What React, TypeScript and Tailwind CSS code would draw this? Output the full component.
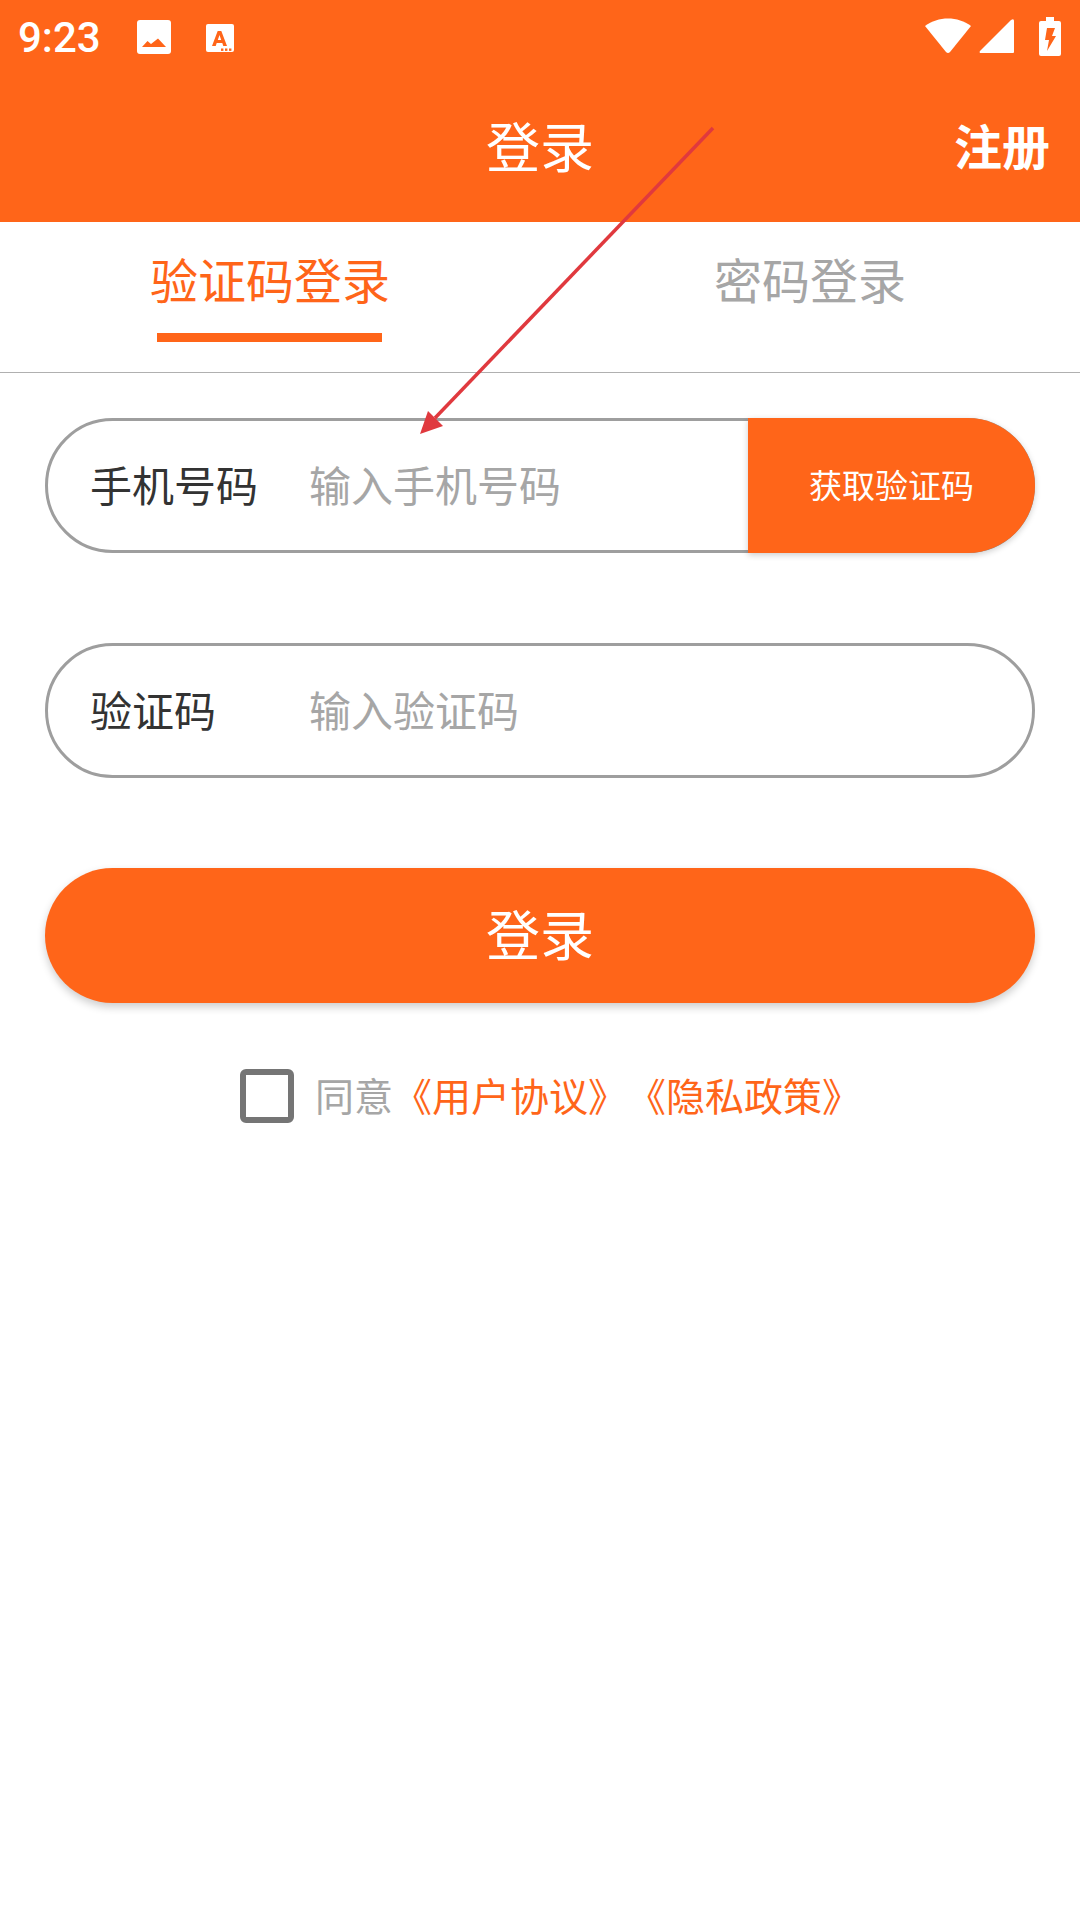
const cjk = "font-['Noto_Sans_CJK_SC','Noto_Sans',sans-serif]";

function StatusBar() {
  return (
    <div className="flex h-[72px] items-center pt-[4px] pl-[18px] pr-[19px] text-white">
      <span className="font-['Roboto',sans-serif] text-[42px] leading-none font-medium">9:23</span>
      {/* picture notification */}
      <svg className="ml-[36px]" width="36" height="36" viewBox="0 0 36 36">
        <rect x="0" y="0" width="34" height="34" rx="3" fill="#fff" />
        <path d="M5 27 L10.5 21 L14 24 L21 18.5 L29 27 Z" fill="#ff6519" />
      </svg>
      {/* app notification */}
      <svg className="ml-[32px]" width="30" height="30" viewBox="0 0 30 30">
        <rect x="1" y="1" width="28" height="28" rx="2" fill="#fff" />
        <path d="M7 23 L12.7 8 H16.3 L22 23 H18.3 L17.3 20 H11.7 L10.7 23 Z M12.8 17 H16.2 L14.5 12 Z" fill="#ff6519" />
        <rect x="16" y="25.5" width="2.4" height="2.4" fill="#ff6519" />
        <rect x="20" y="25.5" width="2.4" height="2.4" fill="#ff6519" />
        <rect x="24" y="25.5" width="2.4" height="2.4" fill="#ff6519" />
      </svg>
      <div className="-mt-[4px] ml-auto flex items-center gap-[8px]">
        {/* wifi */}
        <svg width="46" height="36" viewBox="0 0 46 36">
          <path d="M0 8 C13 -2 33 -2 46 8 L25 34 Q23 36 21 34 Z" fill="#fff" />
        </svg>
        {/* signal */}
        <svg className="mr-[16px]" width="36" height="36" viewBox="0 0 36 36">
          <path d="M1 35 Q0 34 1 33 L32 2 Q35 0 35 3 V34 Q35 35 34 35 Z" fill="#fff" />
        </svg>
        {/* battery charging */}
        <svg width="22" height="39" viewBox="0 0 22 39">
          <path d="M7 0 H15 V4 H20 Q22 4 22 6 V37 Q22 39 20 39 H2 Q0 39 0 37 V6 Q0 4 2 4 H7 Z" fill="#fff" />
          <path d="M8 11 H16 L13 19 H17 L8 34 L10 23 H6 Z" fill="#ff6519" />
        </svg>
      </div>
    </div>
  );
}

function InputRow({ label, placeholder, action }: { label: string; placeholder: string; action?: string }) {
  return (
    <div className="relative mx-[45px] flex h-[135px] items-center rounded-full border-[3px] border-[#9e9e9e] bg-white pb-[4px]">
      <span className="ml-[42px] w-[219px] text-[42px] leading-none text-[#333]">{label}</span>
      <span className="text-[42px] leading-none text-[#a6a6a6]">{placeholder}</span>
      {action && (
        <button className="absolute -top-[3px] -right-[3px] flex h-[135px] w-[287px] items-center justify-center rounded-r-full bg-[#ff6519] pb-[2px] text-[33px] leading-none text-white shadow-[0_2px_6px_rgba(0,0,0,0.2)]">
          {action}
        </button>
      )}
    </div>
  );
}

export default function App() {
  return (
    <div className={`${cjk} relative h-[1920px] w-[1080px] overflow-hidden bg-white`}>
      <header className="h-[222px] bg-[#ff6519]">
        <StatusBar />
        <div className="relative flex h-[150px] items-center justify-center pb-[4px] text-white">
          <h1 className="text-[54px] leading-none font-normal">登录</h1>
          <span className="absolute top-[48px] right-[30px] text-[48px] leading-none font-bold">注册</span>
        </div>
      </header>

      <nav className="flex h-[151px] border-b border-[#b0b0b0]">
        <div className="relative flex w-[540px] justify-center pt-[26px]">
          <span className="text-[48px] leading-[60px] text-[#ff6519]">验证码登录</span>
          <span className="absolute top-[111px] left-[157px] h-[9px] w-[225px] bg-[#ff6519]" />
        </div>
        <div className="flex w-[540px] justify-center pt-[26px]">
          <span className="text-[48px] leading-[60px] text-[#a6a6a6]">密码登录</span>
        </div>
      </nav>

      <main className="pt-[45px]">
        <InputRow label="手机号码" placeholder="输入手机号码" action="获取验证码" />
        <div className="mt-[90px]">
          <InputRow label="验证码" placeholder="输入验证码" />
        </div>
        <button className="mx-[45px] mt-[90px] flex h-[135px] w-[990px] items-center justify-center rounded-full bg-[#ff6519] pb-[5px] text-[54px] leading-none text-white shadow-[0_4px_8px_rgba(0,0,0,0.2)]">
          登录
        </button>
        <div className="mt-[66px] flex items-center pl-[240px]">
          <span className="h-[54px] w-[54px] rounded-[6px] border-[6px] border-[#757575]" />
          <div className="flex pb-[4px]">
            <span className="ml-[21px] text-[39px] leading-none text-[#a6a6a6]">同意</span>
            <span className="text-[39px] leading-none text-[#ff6519]">《用户协议》</span>
            <span className="text-[39px] leading-none text-[#ff6519]">《隐私政策》</span>
          </div>
        </div>
      </main>

      {/* red annotation arrow */}
      <svg className="absolute top-0 left-0" width="1080" height="500" viewBox="0 0 1080 500">
        <line x1="713" y1="128" x2="435" y2="418" stroke="#e0393e" strokeWidth="3.5" />
        <path d="M420 434 L428 411 L443 426 Z" fill="#e0393e" />
      </svg>
    </div>
  );
}
